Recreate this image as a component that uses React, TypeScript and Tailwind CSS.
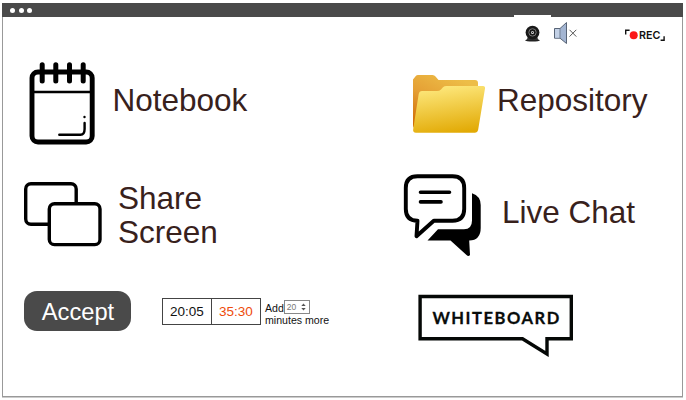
import type { ReactNode } from "react";

function NotebookIcon() {
  return (
    <svg className="h-[84px] w-[66px] shrink-0" viewBox="29 62 66 84" fill="none" stroke="#000" strokeLinecap="round" strokeLinejoin="round">
      <rect x="32" y="72" width="60.2" height="70" rx="6" strokeWidth="4.9" />
      <path d="M42.2 64.8V81M55.8 64.8V81M69.5 64.8V81M83.2 64.8V81" strokeWidth="5" />
      <path d="M33 92H91" strokeWidth="2.3" />
      <path d="M59.3 134.7H80.5Q84.6 134.7 84.6 129V123M84.5 117V117.1" strokeWidth="2.4" />
    </svg>
  );
}

function ScreensIcon() {
  return (
    <svg className="h-[66px] w-[78px] shrink-0" viewBox="24 181 78 66" fill="#fff" stroke="#000" strokeWidth="3.4">
      <rect x="25.7" y="183.7" width="50.5" height="40.6" rx="5.2" />
      <rect x="49.3" y="203.8" width="50.7" height="40.8" rx="5.2" />
    </svg>
  );
}

function FolderIcon() {
  return (
    <svg className="h-[60px] w-[74px] shrink-0" viewBox="412 74 74 60">
      <defs>
        <linearGradient id="folderBack" x1="0.6" y1="0" x2="0" y2="1">
          <stop offset="0" stopColor="#edbd47" />
          <stop offset="0.45" stopColor="#e5a035" />
          <stop offset="1" stopColor="#cc6500" />
        </linearGradient>
        <linearGradient id="folderFront" x1="0.4" y1="0" x2="0.62" y2="1">
          <stop offset="0" stopColor="#fde77b" />
          <stop offset="1" stopColor="#e2aa05" />
        </linearGradient>
      </defs>
      <path d="M413 79.5L415.8 76Q416.6 75 418 75H432.5Q434.5 75 435.5 76.5L438.5 80H475Q478 80 478 83V128H415Q413 128 413 125Z" fill="url(#folderBack)" />
      <path d="M418.7 94Q419.3 91 422 91H437Q439.5 91 441 89.5L443 87.2Q444.3 86 446.5 86H483Q485.4 86 485 88.5L478.2 129.5Q477.5 132.8 474.7 132.8H416Q412.6 132.8 413.2 129Z" fill="url(#folderFront)" />
    </svg>
  );
}

function ChatIcon() {
  return (
    <svg className="h-[84px] w-[78px] shrink-0" viewBox="403 174 78 84">
      <path d="M472 193.2Q480.7 196 480.7 205V228Q480.7 240.2 469.2 240.6L470 255Q468.5 257 466.5 255L450.5 240.6H427.5L438 229.2H464Q472 229.2 472 220.5Z" />
      <path d="M417.5 176.3H452.5Q464.2 176.3 464.2 188V209Q464.2 220.7 452.5 220.7H433.8L416.5 236.2L417.5 220.7Q405.8 220.7 405.8 209V188Q405.8 176.3 417.5 176.3Z" fill="#fff" stroke="#000" strokeWidth="3.9" strokeLinejoin="round" />
      <path d="M420.5 192.2H449.5M420.5 201.9H441" fill="none" stroke="#000" strokeWidth="3.6" strokeLinecap="round" />
    </svg>
  );
}

function WebcamIcon() {
  return (
    <svg className="h-[17px] w-[16px]" viewBox="525 25 16 17">
      <ellipse cx="532.5" cy="40.3" rx="7.4" ry="1.2" fill="#222" />
      <path d="M528 37H537L538.5 40H526.5Z" fill="#333" />
      <circle cx="532.5" cy="32.6" r="6.9" fill="#191919" />
      <circle cx="532.5" cy="32.4" r="3.7" fill="none" stroke="#777" strokeWidth="1" />
      <circle cx="532.5" cy="32.4" r="1.5" fill="#ddd" />
      <circle cx="532.5" cy="32.4" r="0.7" fill="#222" />
    </svg>
  );
}

function MutedIcon() {
  return (
    <svg className="h-[24px] w-[25px]" viewBox="553 21 25 24" fill="none">
      <path d="M554.5 28.5H560L566.5 22.5V43.5L560 38.2H554.5Z" fill="#a3b5d2" stroke="#586476" />
      <path d="M555 29H559.7V37.7H555Z" fill="#c3d1e6" />
      <path d="M560 28.5V38" stroke="#687689" strokeWidth="0.8" />
      <path d="M569.5 29.8L576.3 36.6M576.3 29.8L569.5 36.6" stroke="#555" strokeWidth="1" />
    </svg>
  );
}

function RecordBadge() {
  return (
    <svg className="h-[14px] w-[42px]" viewBox="624 28 42 14">
      <path d="M625.7 34.5V30.2H629.6M660.6 40.2H664.1V36.2" fill="none" stroke="#111" strokeWidth="1.4" />
      <circle cx="633.7" cy="35.3" r="4" fill="#fb1818" />
      <text x="639" y="39" textLength="21.4" lengthAdjust="spacingAndGlyphs" className="font-[Inter,sans-serif] text-[11px] font-semibold" fill="#111">REC</text>
    </svg>
  );
}

function Whiteboard() {
  return (
    <svg className="h-[63px] w-[156px] shrink-0" viewBox="418 294 156 63">
      <path d="M420.1 296.5H571.3V338.7H547V354L522.5 338.7H420.1Z" fill="#fff" stroke="#050806" strokeWidth="3.4" />
      <text transform="translate(432.4 324.1) scale(.93 1)" textLength="136.5" className="font-[Lato,sans-serif] text-[17.8px] font-bold" fill="#080c0a" stroke="#080c0a" strokeWidth="0.3">WHITEBOARD</text>
    </svg>
  );
}

function Label({ children }: { children: ReactNode }) {
  return <span className="text-[31.5px] leading-[33px] text-[#38211c]">{children}</span>;
}

export default function App() {
  return (
    <div className="h-[400px] w-[686px] overflow-hidden bg-white pt-[3px] pl-[2px] font-['Liberation_Sans',Arial,sans-serif]">
      <main className="flex h-[394px] w-[681px] flex-col border border-t-0 border-[#999] bg-white shadow-[0_1px_0_#ccc]">
        <header className="-mx-px flex h-[13.5px] shrink-0 items-center gap-[3.7px] bg-[#4a4a4a] pt-px pl-[8px]">
          <i className="size-[5px] rounded-full bg-white" />
          <i className="size-[5px] rounded-full bg-white" />
          <i className="size-[5px] rounded-full bg-white" />
        </header>
        <nav className="-mt-[1.5px] flex h-[37px] shrink-0 pl-[511px]">
          <div className="flex w-[37px] justify-center bg-white pt-[10px]"><WebcamIcon /></div>
          <div className="ml-[2px] pt-[6px]"><MutedIcon /></div>
          <div className="ml-[46px] pt-[13px]"><RecordBadge /></div>
        </nav>
        <section className="grid shrink-0 grid-cols-[400px_1fr] grid-rows-[100px_118px_100px]">
          <div className="flex items-start gap-[17.5px] pt-[10px] pl-[26px]"><NotebookIcon /><div className="pt-[22px]"><Label>Notebook</Label></div></div>
          <div className="flex items-start gap-[11px] pt-[22px] pl-[9px]"><FolderIcon /><div className="pt-[10px]"><Label>Repository</Label></div></div>
          <div className="flex items-start gap-[16px] pt-[29px] pl-[21px]"><ScreensIcon /><div className="pt-px"><Label>Share<br />Screen</Label></div></div>
          <div className="flex items-start gap-[21px] pt-[22px] pl-0"><ChatIcon /><div className="pt-[22px]"><Label>Live Chat</Label></div></div>
          <div className="flex items-start pt-[21px] pl-[20.5px]">
            <button className="h-[39.5px] w-[107px] shrink-0 rounded-[13px] bg-[#4a4a4a] pt-[2px] pl-[2px] text-[23.7px] leading-[34px] text-white">Accept</button>
            <div className="mt-[7px] ml-[31.5px] flex h-[27px] w-[99px] shrink-0 border-[1.5px] border-[#444] text-[13.5px]">
              <span className="flex flex-1 items-center justify-center border-r border-[#444] pt-[2px] text-[#111]">20:05</span>
              <span className="flex flex-1 items-center justify-center pt-[2px] text-[#ee4b0b]">35:30</span>
            </div>
            <div className="mt-[9px] ml-[4px] w-[68px] shrink-0 text-[10.6px] leading-[12.5px] text-[#111]">
              <div className="flex h-[13px] items-start">
                <span className="pt-[2px]">Add</span>
                <span className="flex h-[14px] w-[26px] items-center justify-between border border-[#888] pr-[3px] pl-[2px] text-[8.5px] text-[#777]">
                  20
                  <svg className="h-[8px] w-[5px]" viewBox="0 0 5 8" fill="#555"><path d="M.3 3L2.5 .4L4.7 3ZM.3 5L2.5 7.6L4.7 5Z" /></svg>
                </span>
              </div>
              <div className="pt-px whitespace-nowrap">minutes more</div>
            </div>
          </div>
          <div className="pt-[24px] pl-[15px]"><Whiteboard /></div>
        </section>
      </main>
    </div>
  );
}
